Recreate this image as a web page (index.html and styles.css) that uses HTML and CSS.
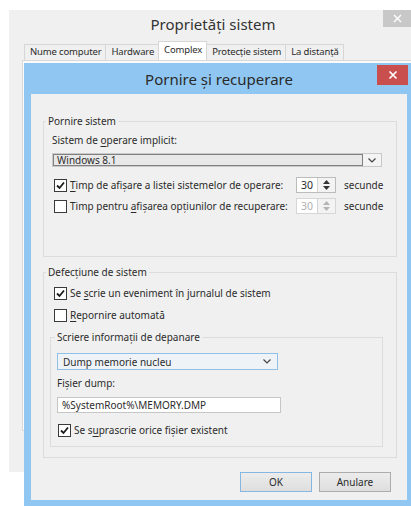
FILE: index.html
```html
<!DOCTYPE html>
<html lang="ro">
<head>
<meta charset="utf-8">
<title>Proprietăți sistem</title>
<link rel="stylesheet" href="styles.css">
</head>
<body>
  <div class="outer">
    <div class="outer-title">Proprietăți sistem</div>
    <div class="outer-close">
      <svg width="9" height="9" viewBox="0 0 9 9"><path d="M1 1L8 8M8 1L1 8" stroke="#fff" stroke-width="1.4"/></svg>
    </div>
    <div class="tabs">
      <span class="tab">Nume computer</span>
      <span class="tab">Hardware</span>
      <span class="tab on">Complex</span>
      <span class="tab">Protecție sistem</span>
      <span class="tab">La distanță</span>
    </div>
    <div class="tabpage"></div>
  </div>

  <div class="dlg">
    <div class="dlg-title">Pornire și recuperare</div>
    <div class="dlg-close">
      <svg width="10" height="10" viewBox="0 0 10 10"><path d="M1.5 1.5L8.5 8.5M8.5 1.5L1.5 8.5" stroke="#fff" stroke-width="1.7"/></svg>
    </div>
    <div class="dlg-body">
      <fieldset class="grp grp-start">
        <legend>Pornire sistem</legend>
        <div class="lbl">Sistem de <u>o</u>perare implicit:</div>
        <div class="combo-os">
          <span class="combo-os-text">Windows 8.1</span>
          <span class="combo-os-btn">
            <svg width="8" height="5" viewBox="0 0 8 5"><path d="M0.5 0.5L4 4L7.5 0.5" fill="none" stroke="#444" stroke-width="1.2"/></svg>
          </span>
        </div>
        <div class="row row-first">
          <span class="cb"><svg width="11" height="11" viewBox="0 0 11 11"><path d="M2 5.5L4.5 8L9 2.5" fill="none" stroke="#1a1a1a" stroke-width="1.8"/></svg></span>
          <span class="txt"><u>T</u>imp de afișare a listei sistemelor de operare:</span>
          <span class="spin">
            <span class="num">30</span>
            <span class="arr">
              <svg width="7" height="4" viewBox="0 0 7 4"><path d="M0 4L3.5 0L7 4Z" fill="#333"/></svg>
              <svg width="7" height="4" viewBox="0 0 7 4"><path d="M0 0L3.5 4L7 0Z" fill="#333"/></svg>
            </span>
          </span>
          <span class="sec">secunde</span>
        </div>
        <div class="row row-second">
          <span class="cb"></span>
          <span class="txt">Timp pentru <u>a</u>fișarea opțiunilor de recuperare:</span>
          <span class="spin off">
            <span class="num">30</span>
            <span class="arr">
              <svg width="7" height="4" viewBox="0 0 7 4"><path d="M0 4L3.5 0L7 4Z" fill="#b5b5b5"/></svg>
              <svg width="7" height="4" viewBox="0 0 7 4"><path d="M0 0L3.5 4L7 0Z" fill="#b5b5b5"/></svg>
            </span>
          </span>
          <span class="sec">secunde</span>
        </div>
      </fieldset>

      <fieldset class="grp grp-fail">
        <legend>Defecțiune de sistem</legend>
        <div class="row row-log">
          <span class="cb"><svg width="11" height="11" viewBox="0 0 11 11"><path d="M2 5.5L4.5 8L9 2.5" fill="none" stroke="#1a1a1a" stroke-width="1.8"/></svg></span>
          <span class="txt">Se <u>s</u>crie un eveniment în jurnalul de sistem</span>
        </div>
        <div class="row row-restart">
          <span class="cb"></span>
          <span class="txt"><u>R</u>epornire automată</span>
        </div>

        <fieldset class="grp grp-debug">
          <legend>Scriere informații de depanare</legend>
          <div class="combo-dump">
            <span>Dump memorie nucleu</span>
            <svg width="8" height="5" viewBox="0 0 8 5"><path d="M0.5 0.5L4 4L7.5 0.5" fill="none" stroke="#444" stroke-width="1.2"/></svg>
          </div>
          <div class="lbl lbl-file">Fișier dump:</div>
          <div class="field">%SystemRoot%\MEMORY.DMP</div>
          <div class="row row-over">
            <span class="cb"><svg width="11" height="11" viewBox="0 0 11 11"><path d="M2 5.5L4.5 8L9 2.5" fill="none" stroke="#1a1a1a" stroke-width="1.8"/></svg></span>
            <span class="txt">Se s<u>u</u>prascrie orice fișier existent</span>
          </div>
        </fieldset>
      </fieldset>

      <div class="buttons">
        <button class="btn btn-default">OK</button>
        <button class="btn">Anulare</button>
      </div>
    </div>
  </div>
</body>
</html>
```

FILE: styles.css
```css
* {
  box-sizing: border-box;
}

html,
body {
  margin: 0;
}

body {
  position: relative;
  width: 411px;
  height: 506px;
  overflow: hidden;
  background: #fff;
  font-family: "Noto Sans", "Open Sans", sans-serif;
  font-size: 10px;
  color: #2b2b2b;
}

u {
  text-decoration-thickness: 1px;
  text-underline-offset: 2px;
}

/* ---- background window: System Properties ---- */
.outer {
  position: absolute;
  left: 9px;
  top: 10px;
  width: 408px;
  height: 462px;
  background: #f0f0f0;
}

.outer-title {
  height: 28px;
  line-height: 28px;
  text-align: center;
  font-size: 15px;
  color: #333;
}

.outer-close {
  position: absolute;
  left: 374px;
  top: 0;
  width: 29px;
  height: 17px;
  background: #c8c8c8;
  display: flex;
  align-items: center;
  justify-content: center;
}

.tabs {
  display: flex;
  align-items: flex-end;
  height: 22px;
  margin-left: 15px;
}

.tab {
  height: 16px;
  padding: 0 4px 0 5px;
  margin-right: -1px;
  border: 1px solid #d6d6d6;
  border-bottom: none;
  background: #f0f0f0;
  font-size: 9.5px;
  letter-spacing: -0.15px;
  line-height: 14px;
  white-space: nowrap;
}

.tab.on {
  position: relative;
  z-index: 1;
  height: 19px;
  background: #fff;
  line-height: 15px;
}

.tabpage {
  height: 371px;
  margin-left: 13px;
  border: 1px solid #d9d9d9;
  background: #fafafa;
}

/* ---- foreground dialog: Startup and Recovery ---- */
.dlg {
  position: absolute;
  left: 24px;
  top: 63px;
  width: 390px;
  height: 445px;
  padding: 0 7px 8px;
  background: #8fc7f2;
  display: flex;
  flex-direction: column;
}

.dlg-title {
  height: 31px;
  line-height: 33px;
  text-align: center;
  font-size: 15px;
  color: #2a2a2a;
}

.dlg-close {
  position: absolute;
  left: 353px;
  top: 2px;
  width: 31px;
  height: 20px;
  background: #c94e4e;
  display: flex;
  align-items: center;
  justify-content: center;
}

.dlg-body {
  flex: 1;
  background: #f0f0f0;
  padding: 20px 10px 0 12px;
  display: flex;
  flex-direction: column;
}

/* group boxes */
.grp {
  margin: 0;
  min-width: 0;
  border: 1px solid #dcdcdc;
}

.grp legend {
  padding: 0 2px;
  line-height: 14px;
}

.grp-start {
  padding: 0 15px 42px 8px;
}

.grp-start legend {
  margin-left: -6px;
}

.grp-fail {
  margin-top: 8px;
  padding: 0 13px 10px 6px;
}

.grp-fail legend {
  margin-left: -4px;
}

.grp-debug {
  margin-top: 8px;
  padding: 0 6px 9px 6px;
}

.grp-debug legend {
  margin-left: -2px;
}

.lbl {
  line-height: 14px;
  margin-top: 5px;
}

/* OS list combo */
.combo-os {
  display: flex;
  width: 330px;
  height: 14px;
  margin-top: 6px;
  border: 1px solid #c9c9c9;
  background: #f4f4f4;
}

.combo-os-text {
  flex: 1;
  border: 1px solid #808080;
  background: #e8e8e8;
  padding-left: 3px;
  line-height: 10px;
  font-size: 10px;
}

.combo-os-btn {
  width: 18px;
  display: flex;
  align-items: center;
  justify-content: center;
}

/* checkbox rows */
.row {
  display: flex;
  align-items: center;
  margin-left: 2px;
  height: 16px;
}

.row-first {
  margin-top: 10px;
}

.row-second {
  margin-top: 5px;
}

.cb {
  flex: none;
  width: 13px;
  height: 13px;
  margin-right: 3px;
  border: 1px solid #3a3a3a;
  background: #fff;
  display: flex;
  align-items: center;
  justify-content: center;
}

.txt {
  flex: 1;
  white-space: nowrap;
}

.spin {
  flex: none;
  display: flex;
  width: 40px;
  height: 16px;
  border: 1px solid #bcbcbc;
  background: #fff;
}

.spin .num {
  width: 20px;
  padding-left: 4px;
  line-height: 14px;
  font-size: 10.5px;
}

.spin .arr {
  flex: 1;
  display: flex;
  flex-direction: column;
  align-items: center;
  justify-content: center;
  gap: 2px;
  border-left: 1px solid #d4d4d4;
  background: #f3f3f3;
}

.spin.off {
  border-color: #d6d6d6;
}

.spin.off .num {
  color: #b0b0b0;
}

.sec {
  flex: none;
  width: 37px;
  margin-left: 8px;
}

.row-log {
  margin-left: 4px;
  margin-top: 7px;
  height: 14px;
}

.row-restart {
  margin-left: 4px;
  margin-top: 8px;
  height: 14px;
}

/* debug info section */
.combo-dump {
  display: flex;
  align-items: center;
  justify-content: space-between;
  width: 221px;
  height: 17px;
  margin-top: 9px;
  padding: 0 6px 0 5px;
  border: 1px solid #92bfe6;
  background: #eef3f8;
}

.lbl-file {
  margin-top: 6px;
}

.field {
  width: 224px;
  height: 16px;
  margin-top: 7px;
  padding-left: 4px;
  border: 1px solid #c6c6c6;
  background: #fff;
  line-height: 14px;
}

.row-over {
  margin-top: 10px;
  margin-left: 1px;
  height: 14px;
}

/* dialog buttons */
.buttons {
  display: flex;
  justify-content: flex-end;
  gap: 7px;
  margin-top: 14px;
  margin-right: 6px;
}

.btn {
  width: 72px;
  height: 20px;
  padding: 0;
  border: 1px solid #acacac;
  background: linear-gradient(#ececec, #dedede);
  font: inherit;
  color: #2b2b2b;
}

.btn-default {
  border-color: #86b7e3;
}
```
